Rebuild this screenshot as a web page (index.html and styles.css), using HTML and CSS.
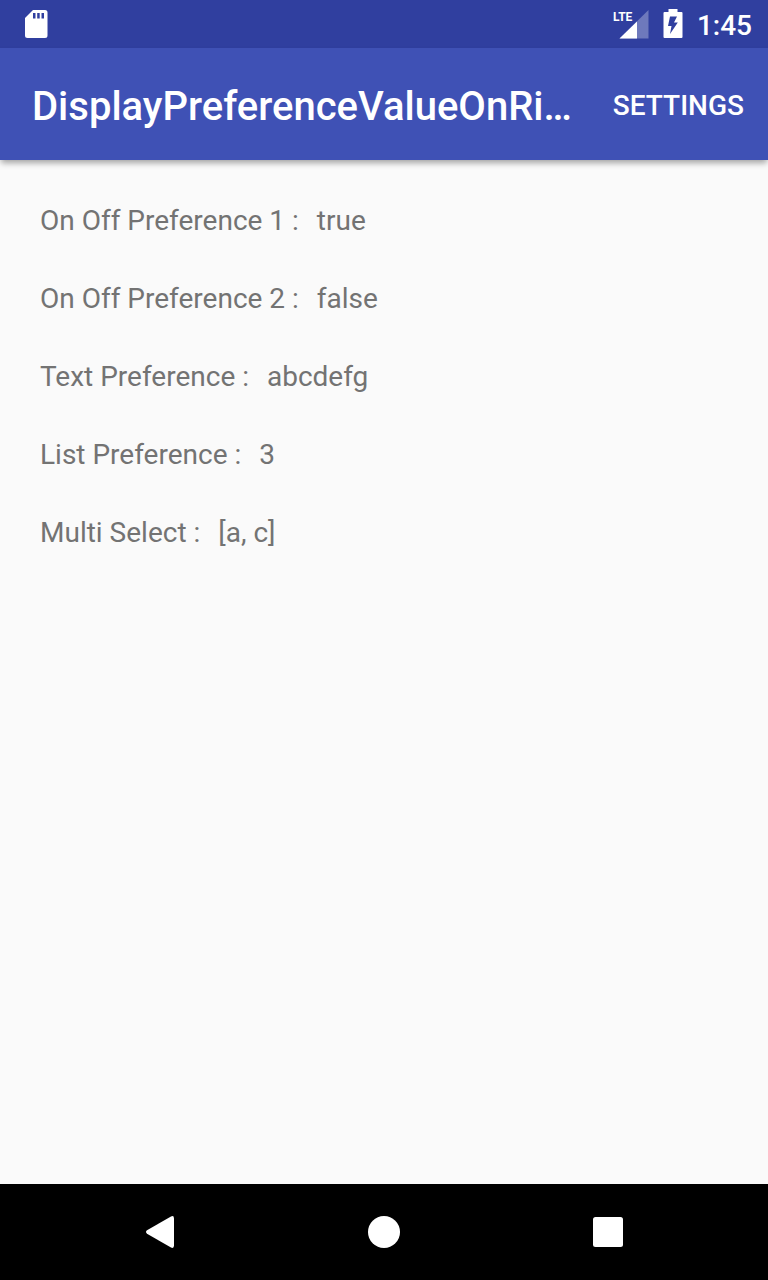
FILE: index.html
```html
<!DOCTYPE html>
<html lang="en">
<head>
<meta charset="utf-8">
<meta name="viewport" content="width=device-width, initial-scale=1">
<title>DisplayPreferenceValueOnRight</title>
<link rel="stylesheet" href="styles.css">
</head>
<body>
<div class="screen">
  <div class="status-bar">
    <svg width="24" height="30" viewBox="0 0 24 30" aria-hidden="true">
      <path fill="#fff" fill-rule="evenodd" d="M9 1H21Q23.500 1 23.500 3.500V26.500Q23.500 29 21 29H3.500Q1 29 1 26.500V9ZM9 4V9.500H11.500V4ZM13.200 4V9.500H15.700V4ZM17.500 4V9.500H20V4Z"/>
    </svg>
    <div class="status-right">
      <svg width="36" height="30" viewBox="0 0 36 30" role="img" aria-label="LTE signal">
        <path fill="#fff" fill-opacity=".3" d="M35.500 1V29.500H6.500Z"/>
        <path fill="#fff" d="M24 12.500V29.500H6.500Z"/>
        <text class="network" x="0" y="12">LTE</text>
      </svg>
      <svg width="20" height="30" viewBox="0 0 20 30" aria-hidden="true">
        <path fill="#fff" fill-rule="evenodd" d="M5.500 0H14.500V3H18.500Q19.500 3 19.500 4V28Q19.500 29 18.500 29H1.500Q.5 29 .5 28V4Q.5 3 1.500 3H5.500ZM7 7.500L5 17H8.500L7 25L14.800 13.500H11L14 7.500Z"/>
      </svg>
      <time class="clock">1:45</time>
    </div>
  </div>
  <header class="app-bar">
    <h1 class="title">DisplayPreferenceValueOnRi…</h1>
    <button class="action" type="button">SETTINGS</button>
  </header>
  <main class="content">
    <dl class="prefs">
      <div class="pref"><dt>On Off Preference 1 :</dt><dd>true</dd></div>
      <div class="pref"><dt>On Off Preference 2 :</dt><dd>false</dd></div>
      <div class="pref"><dt>Text Preference :</dt><dd>abcdefg</dd></div>
      <div class="pref"><dt>List Preference :</dt><dd>3</dd></div>
      <div class="pref"><dt>Multi Select :</dt><dd>[a, c]</dd></div>
    </dl>
  </main>
  <nav class="nav-bar">
    <button class="nav-button" type="button" aria-label="Back">
      <svg width="32" height="32" viewBox="0 0 32 32"><path fill="#fff" d="M3 14.300L27 .4Q30 -.8 30 2.500V29.500Q30 32.800 27 31.600L3 17.700Q1 16 3 14.300Z"/></svg>
    </button>
    <button class="nav-button" type="button" aria-label="Home">
      <svg width="32" height="32" viewBox="0 0 32 32"><circle cx="16" cy="16" r="16" fill="#fff"/></svg>
    </button>
    <button class="nav-button" type="button" aria-label="Overview">
      <svg width="32" height="32" viewBox="0 0 32 32"><rect x="1" y="1" width="30" height="30" rx="2.500" fill="#fff"/></svg>
    </button>
  </nav>
</div>
</body>
</html>
```
FILE: styles.css
```css
* { box-sizing: border-box; }
body { margin: 0; font-family: Roboto, sans-serif; }
button { border: 0; padding: 0; background: none; color: inherit; font: inherit; }
svg { display: block; }
.screen { display: flex; flex-direction: column; min-height: 100vh; background: #fafafa; }
.status-bar { display: flex; align-items: center; justify-content: space-between; height: 48px; padding: 0 16px 0 24px; background: #303f9f; color: #fff; }
.status-right { display: flex; align-items: center; gap: 14px; }
.network { fill: #fff; font-family: "Liberation Sans Narrow", Roboto, sans-serif; font-size: 12px; font-weight: 700; }
.clock { font-size: 28px; font-weight: 500; line-height: 32px; padding-top: 4px; }
.app-bar { display: flex; align-items: center; gap: 40px; height: 112px; padding: 0 24px 0 32px; background: #3f51b5; color: #fff; box-shadow: 0 4px 6px -1px rgba(0, 0, 0, .35); }
.title { flex: 1; min-width: 0; margin: 0; padding-top: 6px; overflow: hidden; font-size: 40px; font-weight: 500; line-height: 48px; text-overflow: ellipsis; white-space: nowrap; }
.action { padding-top: 4px; font-size: 28px; font-weight: 500; line-height: 32px; }
.content { flex: 1; padding: 42px 40px; }
.prefs { display: flex; flex-direction: column; gap: 40px; margin: 0; color: #737373; font-size: 28px; line-height: 38px; }
.pref { display: flex; gap: 18px; }
.pref dd { margin: 0; }
.nav-bar { display: flex; justify-content: center; height: 96px; background: #000; }
.nav-button { display: grid; place-items: center; width: 224px; }
```
